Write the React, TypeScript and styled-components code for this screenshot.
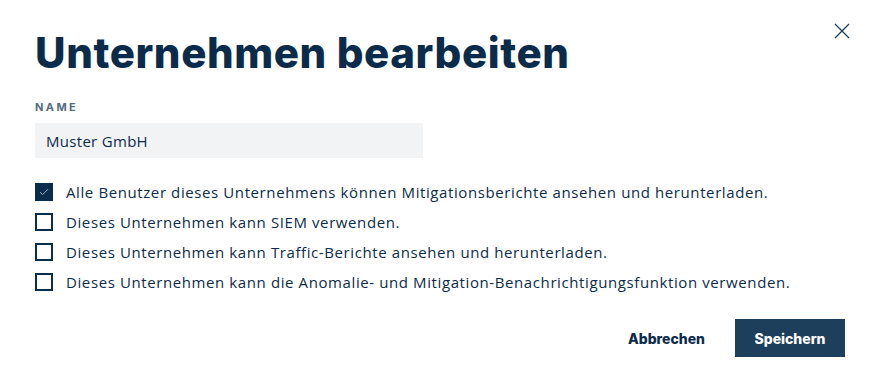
import React, { useState } from "react";
import styled, { createGlobalStyle } from "styled-components";

const GlobalStyle = createGlobalStyle`
  html, body {
    margin: 0;
    padding: 0;
    background: #ffffff;
  }
  body {
    font-family: "Rubik", "Open Sans", "Noto Sans", sans-serif;
    color: #0d2c4b;
  }
  * {
    box-sizing: border-box;
  }
`;

const Dialog = styled.div`
  position: relative;
  width: 879px;
  height: 388px;
  padding: 26px 34px 31px 35px;
  display: flex;
  flex-direction: column;
  background: #ffffff;
`;

const CloseButton = styled.button`
  position: absolute;
  top: 22px;
  right: 28px;
  width: 18px;
  height: 18px;
  padding: 0;
  border: none;
  background: transparent;
  cursor: pointer;
  display: flex;
  align-items: center;
  justify-content: center;
`;

const Title = styled.h1`
  margin: 0;
  font-family: "Inter", "Lato", sans-serif;
  font-weight: 800;
  font-size: 42px;
  line-height: 54px;
  letter-spacing: 0.6px;
  color: #0a2b4b;
`;

const Field = styled.div`
  margin-top: 20px;
  display: flex;
  flex-direction: column;
`;

const Label = styled.label`
  font-family: "Inter", "Lato", sans-serif;
  font-weight: 700;
  font-size: 11px;
  letter-spacing: 2.4px;
  color: #566b7f;
  text-transform: uppercase;
  line-height: 14px;
`;

const TextInput = styled.input`
  margin-top: 9px;
  width: 388px;
  height: 35px;
  border: none;
  outline: none;
  background: #f2f3f5;
  padding: 0 11px;
  font-family: "Open Sans", "Noto Sans", sans-serif;
  font-size: 15px;
  letter-spacing: 0.3px;
  color: #0d2c4b;
`;

const Options = styled.div`
  margin-top: 25px;
  display: flex;
  flex-direction: column;
  gap: 12px;
`;

const OptionRow = styled.label`
  display: flex;
  align-items: center;
  gap: 13px;
  height: 18px;
  font-family: "Open Sans", "Noto Sans", sans-serif;
  font-size: 15px;
  letter-spacing: 0.6px;
  color: #0d2c4b;
  cursor: pointer;
`;

const Box = styled.span<{ $checked: boolean }>`
  width: 18px;
  height: 18px;
  flex: none;
  display: flex;
  align-items: center;
  justify-content: center;
  background: ${(p) => (p.$checked ? "#0b2d4d" : "#ffffff")};
  border: 2px solid #0b2d4d;
`;

const Footer = styled.div`
  margin-top: auto;
  display: flex;
  justify-content: flex-end;
  align-items: center;
  gap: 30px;
`;

const Button = styled.button`
  height: 38px;
  border: none;
  font-family: "Inter", "Lato", sans-serif;
  font-weight: 800;
  font-size: 14px;
  cursor: pointer;
`;

const CancelButton = styled(Button)`
  background: transparent;
  color: #0d2c4b;
  padding: 0;
`;

const SaveButton = styled(Button)`
  width: 110px;
  background: #1d3f5c;
  color: #ffffff;
`;

const options = [
  "Alle Benutzer dieses Unternehmens können Mitigationsberichte ansehen und herunterladen.",
  "Dieses Unternehmen kann SIEM verwenden.",
  "Dieses Unternehmen kann Traffic-Berichte ansehen und herunterladen.",
  "Dieses Unternehmen kann die Anomalie- und Mitigation-Benachrichtigungsfunktion verwenden.",
];

const App: React.FC = () => {
  const [name, setName] = useState("Muster GmbH");
  const [checked, setChecked] = useState<boolean[]>([true, false, false, false]);

  const toggle = (i: number) =>
    setChecked((prev) => prev.map((v, j) => (j === i ? !v : v)));

  return (
    <>
      <GlobalStyle />
      <Dialog>
        <CloseButton aria-label="Schließen">
          <svg width="16" height="16" viewBox="0 0 16 16">
            <path d="M1 1L15 15M15 1L1 15" stroke="#1d3f5c" strokeWidth="1.3" />
          </svg>
        </CloseButton>
        <Title>Unternehmen bearbeiten</Title>
        <Field>
          <Label>Name</Label>
          <TextInput value={name} onChange={(e) => setName(e.target.value)} />
        </Field>
        <Options>
          {options.map((text, i) => (
            <OptionRow key={i} onClick={() => toggle(i)}>
              <Box $checked={checked[i]}>
                {checked[i] && (
                  <svg width="10" height="8" viewBox="0 0 10 8">
                    <path d="M1 4.2L3.6 6.6L9 1.2" fill="none" stroke="#9fb0c0" strokeWidth="1" />
                  </svg>
                )}
              </Box>
              {text}
            </OptionRow>
          ))}
        </Options>
        <Footer>
          <CancelButton>Abbrechen</CancelButton>
          <SaveButton>Speichern</SaveButton>
        </Footer>
      </Dialog>
    </>
  );
};

export default App;
